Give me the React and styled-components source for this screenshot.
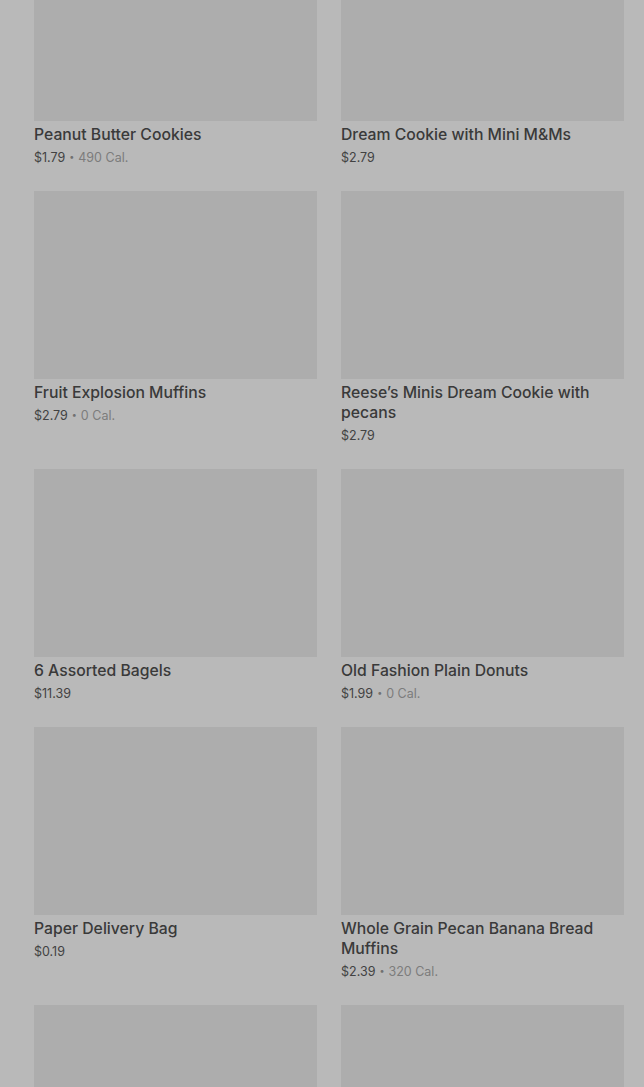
import React from "react";
import styled, { createGlobalStyle } from "styled-components";

const GlobalStyle = createGlobalStyle`
	html, body {
		margin: 0;
		padding: 0;
		background: #b9b9b9;
		overflow: hidden;
	}
	* {
		box-sizing: border-box;
	}
`;

const items = [
	{ name: "Peanut Butter Cookies", price: "$1.79", cal: "490 Cal." },
	{ name: "Dream Cookie with Mini M&Ms", price: "$2.79" },
	{ name: "Fruit Explosion Muffins", price: "$2.79", cal: "0 Cal." },
	{ name: "Reese’s Minis Dream Cookie with pecans", price: "$2.79" },
	{ name: "6 Assorted Bagels", price: "$11.39" },
	{ name: "Old Fashion Plain Donuts", price: "$1.99", cal: "0 Cal." },
	{ name: "Paper Delivery Bag", price: "$0.19" },
	{ name: "Whole Grain Pecan Banana Bread Muffins", price: "$2.39", cal: "320 Cal." },
	{ name: "", price: "" },
	{ name: "", price: "" },
];

const App = () => {
	return (
		<Page>
			<GlobalStyle />
			<Grid>
				{items.map((item, i) => (
					<Card key={i}>
						<Thumb />
						{item.name && <Title>{item.name}</Title>}
						{item.price && (
							<Meta>
								{item.price}
								{item.cal && (
									<>
										<Dot>•</Dot>
										<Cal>{item.cal}</Cal>
									</>
								)}
							</Meta>
						)}
					</Card>
				))}
			</Grid>
		</Page>
	);
};

const Page = styled.div`
	width: 644px;
	height: 1087px;
	overflow: hidden;
	background: #b9b9b9;
	font-family: Inter, "Liberation Sans", sans-serif;
`;

// page is scrolled down: first row image is cut off at the top
const Grid = styled.div`
	display: grid;
	grid-template-columns: 283px 283px;
	column-gap: 24px;
	row-gap: 23px;
	padding: 0 20px 0 34px;
	margin-top: -67px;
	align-items: start;
`;

const Card = styled.div`
	display: flex;
	flex-direction: column;
`;

const Thumb = styled.div`
	height: 188px;
	background: #adadad;
`;

const Title = styled.div`
	margin-top: 4px;
	font-size: 15.75px;
	line-height: 20px;
	font-weight: 500;
	color: #3a3a3a;
`;

const Meta = styled.div`
	margin-top: 3px;
	height: 20px;
	font-size: 12.5px;
	line-height: 20px;
	color: #424242;
`;

const Dot = styled.span`
	display: inline-block;
	margin: 0 4px;
	font-size: 9px;
	line-height: 0;
	vertical-align: 2px;
	color: #707070;
`;

const Cal = styled.span`
	color: #7c7c7c;
`;

export default App;
